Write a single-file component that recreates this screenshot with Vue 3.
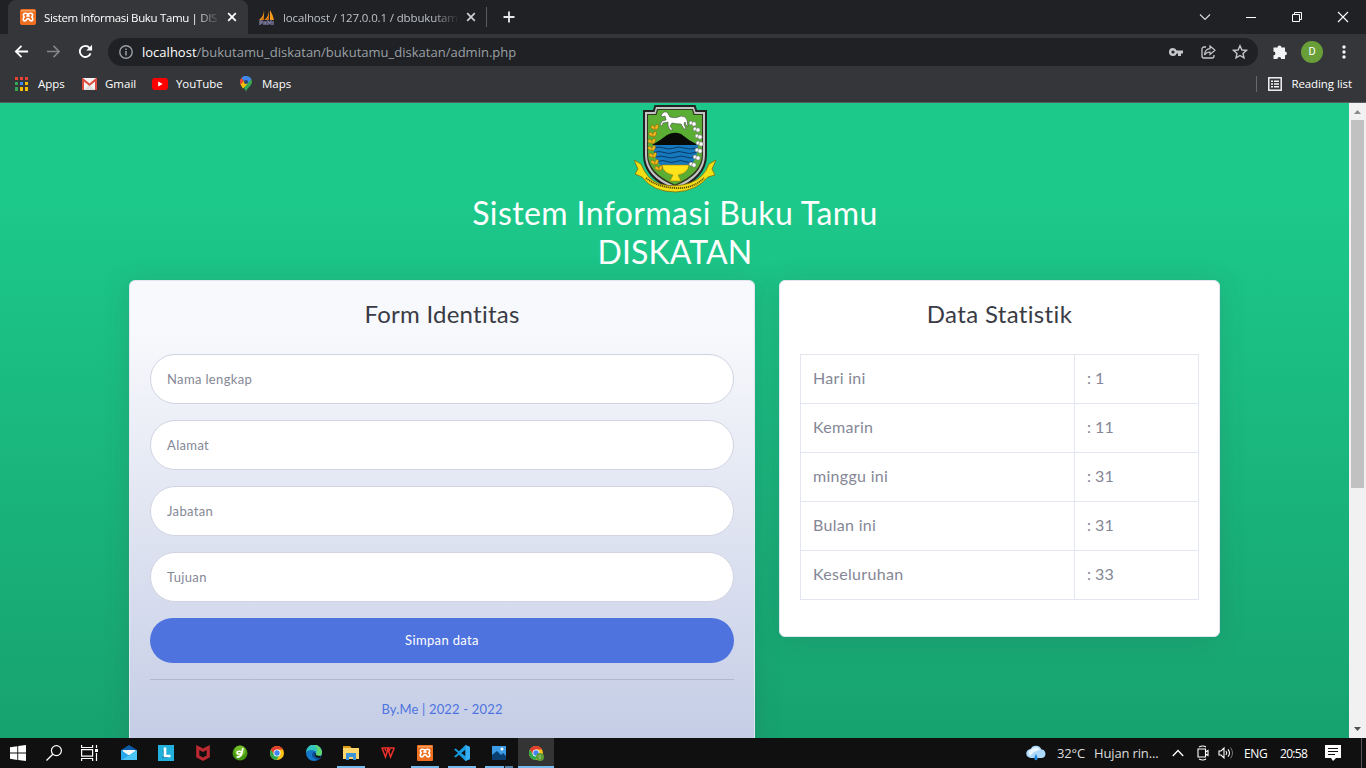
<script setup>
const fields = ['Nama lengkap', 'Alamat', 'Jabatan', 'Tujuan']
const stats = [
  ['Hari ini', ': 1'],
  ['Kemarin', ': 11'],
  ['minggu ini', ': 31'],
  ['Bulan ini', ': 31'],
  ['Keseluruhan', ': 33'],
]
const leftLeaves = [[20, 24], [18, 31], [17, 38], [17, 45], [18, 52], [20, 59], [24, 65]]
const rightBuds = [[59, 19], [63, 25], [65, 32], [66, 39], [65, 46], [63, 53], [59, 60]]
</script>

<template>
  <div class="screen">
    <header class="browser">
      <div class="tabs">
        <div class="tab active">
          <svg class="fav" viewBox="0 0 16 16"><rect width="16" height="16" rx="2" fill="#ee6f20"/><rect x="1" y="1" width="14" height="1.500" fill="#f59a5c"/><path d="M8 5.800Q7.400 4.200 5.400 4.200 3.400 4.200 3.400 6 3.400 7.300 4.300 8 3.200 8.700 3.200 10 3.200 11.900 5 11.900 6.400 11.900 6.700 10.200L8 9.500 9.300 10.200Q9.600 11.900 11 11.900 12.800 11.900 12.800 10 12.800 8.700 11.700 8 12.600 7.300 12.600 6 12.600 4.200 10.600 4.200 8.600 4.200 8 5.800zM6.400 7.500L8 6.500 9.600 7.500" fill="none" stroke="#fff" stroke-width="1.600" stroke-linejoin="round"/></svg>
          <span class="tabtitle t1">Sistem Informasi Buku Tamu | DIS</span>
          <svg class="x" viewBox="0 0 10 10"><path d="M1.2 1.2l7.6 7.6M8.8 1.2L1.2 8.8" stroke="#fff" stroke-width="1.8"/></svg>
        </div>
        <div class="tab other">
          <svg class="fav" viewBox="0 0 16 16"><path d="M5 1Q5 7 0 11H5zM10 1Q10 7 5.500 11H10zM11 1Q14 6 15 11H11z" fill="#f89c1c"/><path d="M5 1v10H2Q6 7 5 1M10 1v10H7Q11 6 10 1" fill="#c96b0c"/><path d="M1 16v-4h2v2H1m4-2v4m0-2h2m0-2v4M9 16v-4l1.500 2 1.500-2v4m2-4v4" fill="none" stroke="#77779c" stroke-width="1.400"/></svg>
          <span class="tabtitle t2">localhost / 127.0.0.1 / dbbukutam</span>
          <svg class="x" viewBox="0 0 10 10"><path d="M1.2 1.2l7.6 7.6M8.8 1.2L1.2 8.8" stroke="#cfd0d2" stroke-width="1.7"/></svg>
        </div>
        <i class="tabsep"></i>
        <svg class="plus" viewBox="0 0 12 12"><path d="M6 .5v11M.5 6h11" stroke="#e8eaed" stroke-width="1.8"/></svg>
        <div class="wincontrols">
          <svg viewBox="0 0 12 12"><path d="M1 3.5l5 5 5-5" fill="none" stroke="#ddd" stroke-width="1.1"/></svg>
          <svg viewBox="0 0 12 12"><path d="M1 6.5h10" stroke="#fff"/></svg>
          <svg viewBox="0 0 12 12"><path d="M1.5 3.5h7v7h-7zM3.5 3.5v-2h7v7h-2" fill="none" stroke="#fff"/></svg>
          <svg viewBox="0 0 12 12"><path d="M1 1l10 10M11 1L1 11" stroke="#fff" stroke-width="1.1"/></svg>
        </div>
      </div>
      <div class="toolbar">
        <svg class="nav" viewBox="0 0 16 16"><path d="M15 8H2M8 2L2 8l6 6" fill="none" stroke="#fff" stroke-width="1.9"/></svg>
        <svg class="nav" viewBox="0 0 16 16"><path d="M1 8h13M8 2l6 6-6 6" fill="none" stroke="#85868a" stroke-width="1.7"/></svg>
        <svg class="nav" viewBox="0 0 16 16"><path d="M13.4 10A5.9 5.9 0 1 1 12.3 4" fill="none" stroke="#fff" stroke-width="2"/><path d="M15 .8V7H8.8z" fill="#fff"/></svg>
        <div class="omni">
          <svg class="info" viewBox="0 0 14 14"><circle cx="7" cy="7" r="6.2" fill="none" stroke="#9aa0a6" stroke-width="1.4"/><path d="M7 6v4.4M7 3.4v1.5" stroke="#9aa0a6" stroke-width="1.5"/></svg>
          <span class="url"><b>localhost</b>/bukutamu_diskatan/bukutamu_diskatan/admin.php</span>
          <svg class="oi" viewBox="0 0 16 16"><path fill-rule="evenodd" d="M5 4a4 4 0 1 0 3.7 5.4H10V12h3V9.4h2V6.6H8.7A4 4 0 0 0 5 4zm0 2.4a1.6 1.6 0 1 1 0 3.2 1.6 1.6 0 0 1 0-3.2z" fill="#c6c7c9"/></svg>
          <svg class="oi" viewBox="0 0 16 16"><path d="M6 3H4a2 2 0 0 0-2 2v7a2 2 0 0 0 2 2h8a2 2 0 0 0 2-2v-1" fill="none" stroke="#c6c7c9" stroke-width="1.3"/><path d="M10 2l5 4.3-5 4.2V8Q6.5 8 4.5 11 5 5 10 4.7z" fill="none" stroke="#c6c7c9" stroke-width="1.2"/></svg>
          <svg class="oi" viewBox="0 0 16 16"><path d="M8 1.8l1.9 4.2 4.5.4L11 9.4l1 4.5-4-2.4-4 2.4 1-4.5-3.4-3 4.5-.4z" fill="none" stroke="#c6c7c9" stroke-width="1.4"/></svg>
        </div>
        <svg class="puzzle" viewBox="0 0 16 16"><path d="M1.5 3.500h4a2 2 0 1 1 4 0H13v4a1.9 1.9 0 1 1 0 3.8V15H9.2a1.9 1.9 0 0 0-3.8 0H1.5v-3.700a1.9 1.9 0 0 0 0-3.8z" fill="#f1f3f4"/></svg>
        <span class="avatar">D</span>
        <svg class="dots" viewBox="0 0 4 16"><g fill="#f1f3f4"><circle cx="2" cy="3" r="1.7"/><circle cx="2" cy="8" r="1.7"/><circle cx="2" cy="13" r="1.7"/></g></svg>
      </div>
      <div class="bookmarks">
        <svg class="apps" viewBox="0 0 13 14"><path d="M0 0h3v3H0zM5 0h3v3H5zM10 0h3v3h-3z" fill="#ea4335"/><path d="M0 5h3v3H0zM0 10h3v4H0z" fill="#34a853"/><path d="M5 5h3v3H5z" fill="#4285f4"/><path d="M10 5h3v3h-3zM5 10h3v4H5zM10 10h3v4h-3z" fill="#fbbc04"/></svg>
        <span class="b1">Apps</span>
        <svg class="gmail" viewBox="0 0 15 12"><rect width="15" height="12" rx="1" fill="#f3f3f3"/><path d="M2 12l5.5-5 5.5 5" fill="#ddd"/><path d="M1 12V1.4l6.5 5.4L14 1.4V12" fill="none" stroke="#dd4b3e" stroke-width="2"/></svg>
        <span class="b2">Gmail</span>
        <svg class="yt" viewBox="0 0 16 12"><rect width="16" height="12" rx="3" fill="#f00"/><path d="M6.2 3.4v5.2L10.7 6z" fill="#fff"/></svg>
        <span class="b3">YouTube</span>
        <svg class="map" viewBox="0 0 12 16"><path d="M6 0a6 6 0 0 0-6 6c0 4 5 5 6 10 1-5 6-6 6-10a6 6 0 0 0-6-6z" fill="#34a853"/><path d="M1.4 2A6 6 0 0 1 8 .4L4 5z" fill="#4285f4"/><path d="M1.4 2L4 5 .7 9A6 6 0 0 1 1.4 2z" fill="#ea4335"/><path d="M.6 8.5L4 5l3.8 2.5-5 5z" fill="#fbbc04"/><path d="M8 .4A6 6 0 0 1 11.3 3L8 7 4 5z" fill="#4285f4"/><circle cx="6" cy="6" r="2.1" fill="#28457c"/></svg>
        <span class="b4">Maps</span>
        <i class="bsep"></i>
        <svg class="read" viewBox="0 0 14 14"><rect x=".8" y=".8" width="12.4" height="12.4" fill="none" stroke="#f1f3f4" stroke-width="1.5"/><path d="M3 4.2h2M3 7h2M3 9.8h2M6 4.2h5M6 7h5M6 9.8h5" stroke="#f1f3f4" stroke-width="1.5"/></svg>
        <span class="b5">Reading list</span>
      </div>
    </header>

    <div class="view">
      <main class="page">
        <svg class="crest" viewBox="0 0 82 90">
          <path d="M20.500 1H61.500L63 6H73V51Q73 75 41 87Q9 75 9 51V6H19z" fill="#222"/>
          <path d="M22 3H60L61.500 8H71V51Q71 73 41 84.500Q11 73 11 51V8H20.500z" fill="#c4c4c4"/>
          <path d="M23 5H59L60.500 10H69V51Q69 71 41 82Q13 71 13 51V10H21.500z" fill="#303820"/>
          <path d="M24 6H58L59.500 11H68V50Q68 69 41 80.500Q14 69 14 50V11H22.500z" fill="#5aae34"/>
          <path d="M30 8L33 8 36 13Q42 15 47 12Q52 12 53 16L54 23 52 21 51 18 50 20 52 25H50L47 20Q42 20 38 19L36 22 39 26H36L34 22 34 18 29 19 28 22 26 21 28 17 32 16 31 12 28 13 27 11z" fill="#fff" stroke="#555f50" stroke-width=".7"/>
          <path d="M18 41Q27 36 33 31Q40 27 47 30Q54 36 64 41z" fill="#090b08"/>
          <path d="M19 41H64Q64 53 57 61H26Q19 53 19 41z" fill="#1678bd"/>
          <path d="M20 44q5-2 10 0t10 0 10 0 13 0M20 48.500q5-2 10 0t10 0 10 0 12 0M22 53q5-2 10 0t10 0 10 0 8 0M24 57.500q5-2 9 0t9 0 9 0 7 0" fill="none" stroke="#073c69" stroke-width="1"/>
          <path d="M28 61H55Q54 69 44 71L47 77H36L39 71Q29 69 28 61z" fill="#ffe21a" stroke="#a67c08" stroke-width=".6"/>
          <g fill="#f0b819" stroke="#875d0c" stroke-width=".5"><g v-for="p in leftLeaves" :key="p[1]"><ellipse :cx="p[0] - 1" :cy="p[1]" rx="2.700" ry="1.600" :transform="`rotate(35 ${p[0]} ${p[1]})`"/><ellipse :cx="p[0] + 2" :cy="p[1] - 2" rx="1.600" ry="2.700" :transform="`rotate(25 ${p[0]} ${p[1]})`"/></g></g>
          <g fill="#fff" stroke="#686868" stroke-width=".6"><g v-for="p in rightBuds" :key="p[1]"><circle :cx="p[0] - 2" :cy="p[1]" r="2"/><circle :cx="p[0] + 1" :cy="p[1] + 1" r="2.200"/></g></g>
          <path d="M0 56L7 60Q13 76 26 80Q41 84 56 79Q70 74 75 60L82 56 78 65 81 71 74 73Q62 87 42 88Q19 88 8 73L1 70 4 65z" fill="#f2df14" stroke="#816b0c" stroke-width=".8"/>
          <path d="M12 74Q23 83 41 84T70 74" fill="none" stroke="#5d4a12" stroke-width="1.800" stroke-dasharray="1.200 .8"/>
        </svg>
        <h1><span class="h1a">Sistem Informasi Buku Tamu</span><span class="h1b">DISKATAN</span></h1>
        <div class="cards">
          <section class="card form">
            <h2 class="hf">Form Identitas</h2>
            <input v-for="f in fields" :key="f" type="text" :placeholder="f">
            <button type="button">Simpan data</button>
            <hr>
            <a class="credit">By.Me | 2022 - 2022</a>
          </section>
          <section class="card stat">
            <h2 class="hs">Data Statistik</h2>
            <table>
              <tbody>
                <tr v-for="s in stats" :key="s[0]"><td class="k">{{ s[0] }}</td><td>{{ s[1] }}</td></tr>
              </tbody>
            </table>
          </section>
        </div>
      </main>
      <div class="scroll">
        <svg viewBox="0 0 17 17"><path d="M5 11l3.500-4 3.500 4z" fill="#8a8a8a"/></svg>
        <i></i>
        <svg viewBox="0 0 17 17"><path d="M5 6l3.500 4L12 6z" fill="#505050"/></svg>
      </div>
    </div>

    <footer class="taskbar">
      <span class="sys start"><svg viewBox="0 0 16 16"><path d="M0 2.300L7.300 1.200V7.600H0zM8.200 1.100L16 0V7.600H8.200zM0 8.500H7.300V14.900L0 13.800zM8.200 8.500H16V16L8.200 15z" fill="#fff"/></svg></span>
      <span class="sys find"><svg viewBox="0 0 16 16"><circle cx="10.400" cy="5.600" r="5" fill="none" stroke="#fff" stroke-width="1.200"/><path d="M6.800 9.200L.5 15.500" stroke="#fff" stroke-width="1.300"/></svg></span>
      <span class="sys view3"><svg viewBox="0 0 17 16"><path d="M.6 0v2.500h11V0M.6 16v-2.500h11V16M.6 4.700h11v6.500H.6zM15.500 0v3M15.500 8v8" fill="none" stroke="#fff" stroke-width="1.200"/><path d="M14 4h3v3h-3z" fill="#fff"/></svg></span>
      <span class="app"><svg viewBox="0 0 16 16"><path d="M0 5l8-5 8 5v3H0z" fill="#0d5aa7"/><path d="M1.500 5h13v5h-13z" fill="#f1f8fc"/><path d="M0 5l8 5.500L16 5v10H0z" fill="#28a8ea"/><path d="M16 5v10H1z" fill="#4cc4f5"/></svg></span>
      <span class="app"><svg viewBox="0 0 16 16"><path d="M0 0h16v16H0z" fill="#22b0dc"/><path d="M4 4l2 6-2 3h6" fill="#087199"/><path d="M7 2.500v8.500h5.500" fill="none" stroke="#fff" stroke-width="2.600"/></svg></span>
      <span class="app"><svg viewBox="0 0 16 16"><path d="M1.200 0L8 3.500 14.800 0v12.300L8 16l-6.800-3.700zM4.300 5v5.500L8 12.600l3.700-2.100V5L8 7z" fill-rule="evenodd" fill="#bd2931"/></svg></span>
      <span class="app"><svg viewBox="0 0 16 16"><circle cx="8" cy="8" r="7.500" fill="#459610"/><circle cx="8" cy="6" r="5.500" fill="#71bd2a"/><path d="M11 3L9.500 9Q8.500 12.500 4.500 12" fill="none" stroke="#fff" stroke-width="1.700"/><ellipse cx="7.300" cy="7.800" rx="2.300" ry="1.500" fill="none" stroke="#fff" stroke-width="1.500"/></svg></span>
      <span class="app"><svg viewBox="0 0 16 16"><circle cx="8" cy="8" r="7" fill="#fbc116"/><path d="M1.940 4.500A7 7 0 0 0 7.500 15L11 9.500H5z" fill="#2da94f"/><path d="M1.940 4.500A7 7 0 0 1 14.060 4.500H8L5 9.500z" fill="#e33b2e"/><circle cx="8" cy="8" r="3.500" fill="#fff"/><circle cx="8" cy="8" r="2.700" fill="#4285f4"/></svg></span>
      <span class="app"><svg viewBox="0 0 16 16"><circle cx="8" cy="8" r="8" fill="#1477c9"/><path d="M0 7A8 8 0 0 1 16 8Q15 12 10 11 8.500 10 10 8 9 4.500 5 5 2 5 0 7z" fill="#34c4be"/><path d="M8 0a8 8 0 0 1 8 8q-1 4-6 3 1-1 .5-3Q13 4 8 0z" fill="#62d56b"/><path d="M10 6Q6 7 6 10t6 5.100Q15 13.500 15.500 12 8 14 8.500 8z" fill="#0b4c99"/><path d="M9.700 8Q8.500 11 15 11L14 13Q8 13 8.500 8z" fill="#111"/></svg></span>
      <span class="app open"><svg viewBox="0 0 16 16"><path d="M0 1h7l1.500 2H0z" fill="#dc9b12"/><path d="M0 3h16v11H0z" fill="#ffd669"/><path d="M3 8h10v7h-3v-3H6v3H3z" fill="#3c94d8"/></svg></span>
      <span class="app"><svg viewBox="0 0 16 16"><path d="M1.500 3H14.500M2 3l3.500 9L8 4l2.500 8L14.300 3M5 4l1 2m4-2L9 6" fill="none" stroke="#f0302a" stroke-width="1.500"/></svg></span>
      <span class="app open"><svg viewBox="0 0 16 16"><rect width="16" height="16" rx="1" fill="#ee6f20"/><rect x="1" y="1" width="14" height="1.500" fill="#f59a5c"/><path d="M8 5.800Q7.400 4.200 5.400 4.200 3.400 4.200 3.400 6 3.400 7.300 4.300 8 3.200 8.700 3.200 10 3.200 11.900 5 11.900 6.400 11.900 6.700 10.200L8 9.500 9.300 10.200Q9.600 11.900 11 11.900 12.800 11.900 12.800 10 12.800 8.700 11.700 8 12.600 7.300 12.600 6 12.600 4.200 10.600 4.200 8.600 4.200 8 5.800zM6.400 7.500L8 6.500 9.600 7.500" fill="none" stroke="#fff" stroke-width="1.600" stroke-linejoin="round"/></svg></span>
      <span class="app open"><svg viewBox="0 0 16 16"><path d="M11.500 0L16 2v12l-4.500 2L5 9.700l-3.300 2.700L0 11.500 4 8 0 4.500l1.700-.9L5 6.300zM11.500 4.700L7.300 8l4.200 3.300z" fill-rule="evenodd" fill="#169be0"/><path d="M11.500 0L16 2v12l-4.500 2z" fill="#35abf0"/></svg></span>
      <span class="app open double"><svg viewBox="0 0 16 16"><path d="M1 1h14v14H1z" fill="#3b9be6"/><path d="M1 10l5-4 4 4 2-2 3 3v4H1z" fill="#0b3f72"/><circle cx="11" cy="4" r="1.500" fill="#fff"/></svg></span>
      <span class="app open current"><svg viewBox="0 0 16 16"><circle cx="8" cy="8" r="7" fill="#fbc116"/><path d="M1.940 4.500A7 7 0 0 0 7.500 15L11 9.500H5z" fill="#2da94f"/><path d="M1.940 4.500A7 7 0 0 1 14.060 4.500H8L5 9.500z" fill="#e33b2e"/><circle cx="8" cy="8" r="3.500" fill="#fff"/><circle cx="8" cy="8" r="2.700" fill="#4285f4"/><circle cx="12" cy="12" r="4" fill="#5e9c36"/><path d="M11 10.500v3h1.500v-3z" fill="none" stroke="#a8c98e" stroke-width=".6"/></svg></span>
      <div class="tray">
        <svg class="cloud" viewBox="0 0 20 16"><path d="M5 13a4.500 4.500 0 0 1-.5-9A6 6 0 0 1 15.500 4.500 4.300 4.300 0 0 1 16 13z" fill="#acd9fa"/><path d="M4 11a4 4 0 0 1 2-7A5 5 0 0 1 14 4.500L8 7z" fill="#e9f6ff"/><path d="M10 9q-2.500 4-1.500 5.500t3 0Q12 13 10 9z" fill="#2185d8"/></svg>
        <span class="temp">32°C</span>
        <span class="wx">Hujan rin...</span>
        <svg class="chev" viewBox="0 0 12 8"><path d="M.8 7L6 1.500 11.200 7" fill="none" stroke="#fff" stroke-width="1.300"/></svg>
        <svg class="cam" viewBox="0 0 12 16"><path d="M1 4h7.500v8H1zM8.500 7L11 5.500v5L8.500 9M2 2q4-2 7 0M2 14q4 2 7 0" fill="none" stroke="#fff" stroke-width="1.100"/></svg>
        <svg class="vol" viewBox="0 0 16 14"><path d="M1 5h2l3-3v10L3 9H1zM8 5q1.500 2 0 4M10 3.300q3 3.700 0 7.400" fill="none" stroke="#fff" stroke-width="1.100"/><path d="M12.500 1.500q4 5.500 0 11" fill="none" stroke="#777"/></svg>
        <span class="eng">ENG</span>
        <span class="time">20:58</span>
        <svg class="note" viewBox="0 0 16 16"><path d="M0 0h16v13h-5l-3 3-2-3H0z" fill="#fff"/><path d="M3 3.500h10M3 6.500h10M3 9.500h7" stroke="#111"/></svg>
        <i class="peek"></i>
      </div>
    </footer>
  </div>
</template>

<style>
body { margin: 0; background: #111; overflow: hidden; }
</style>
<style scoped>
* { box-sizing: border-box; }
svg { display: block; flex: none; }
.screen { width: 1366px; height: 768px; display: flex; flex-direction: column; overflow: hidden; font-family: "Open Sans", "Noto Sans", sans-serif; font-size: 12px; color: #fff; font-variant-ligatures: none; }
.browser { height: 103px; background: #35363a; border-bottom: 1px solid #5b5c60; flex: none; }
span { white-space: nowrap; }
.tabs { height: 34px; background: #202124; display: flex; align-items: center; padding-left: 8px; }
.tab { height: 34px; display: flex; align-items: center; padding-left: 12px; width: 240px; }
.tab.active { background: #35363a; border-radius: 8px 8px 0 0; }
.tab.other { width: 238px; padding-left: 11px; color: #bdc1c6; }
.fav { width: 16px; height: 16px; margin-right: 8px; }
.tabtitle { width: 175px; font-size: 11.5px; -webkit-mask-image: linear-gradient(90deg, #000 150px, transparent 176px); mask-image: linear-gradient(90deg, #000 150px, transparent 176px); }
.t1 { letter-spacing: -.35px; }
.t2 { letter-spacing: -.14px; }
.x { width: 10px; height: 10px; margin-left: 8px; }
.tabsep { width: 1px; height: 20px; background: #5a5b5e; }
.plus { width: 12px; height: 12px; margin-left: 16px; }
.wincontrols { display: flex; margin-left: auto; gap: 34px; padding-right: 17px; height: 28px; align-items: center; }
.wincontrols svg { width: 12px; height: 12px; }
.toolbar { height: 35px; display: flex; align-items: center; padding: 0 20px 0 14px; }
.nav { width: 15px; height: 15px; margin-right: 17px; }
.toolbar .nav:nth-child(3) { margin-right: 15px; }
.omni { width: 1150px; height: 28px; border-radius: 14px; background: #202124; display: flex; align-items: center; padding: 0 10px 0 11px; gap: 16px; }
.info { width: 14px; height: 14px; }
.url { flex: 1; margin-left: -7px; font-size: 13px; color: #9aa0a6; letter-spacing: .01px; }
.url b { font-weight: 400; color: #fff; }
.oi { width: 16px; height: 16px; }
.puzzle { width: 16px; height: 16px; margin-left: 14px; }
.avatar { width: 22px; height: 22px; border-radius: 50%; background: #689f38; margin-left: 13px; font: 11px/22px Roboto, sans-serif; text-align: center; }
.dots { width: 4px; height: 16px; margin-left: auto; }
.bookmarks { height: 31px; display: flex; align-items: center; padding: 0 14px 2px 15px; }
.apps { width: 13px; height: 14px; margin-right: 10px; }
.b1 { width: 44px; }
.gmail { width: 15px; height: 12px; margin-right: 8px; }
.b2 { width: 47px; }
.yt { width: 16px; height: 12px; margin-right: 8px; }
.b3 { width: 64px; letter-spacing: -.1px; }
.map { width: 12px; height: 16px; margin-right: 10px; }
.bsep { width: 1px; height: 16px; background: #68696c; margin-left: auto; margin-right: 11px; }
.read { width: 14px; height: 14px; margin-right: 9px; }
.bookmarks span { font-size: 11.500px; }
.b5 { letter-spacing: -.08px; }

.view { height: 635px; display: flex; overflow: hidden; flex: none; }
.page { width: 1349px; height: 1037px; background: linear-gradient(180deg, #1cc88a 10%, #13855c 100%); display: flex; flex-direction: column; align-items: center; font-family: Lato, sans-serif; }
.crest { width: 82px; height: 90px; margin: 1px 0 0 1px; }
h1 { margin: 0 0 9px 1px; font-size: 32px; line-height: 38.500px; font-weight: 400; display: flex; flex-direction: column; align-items: center; height: 77px; }
.h1a { letter-spacing: .4px; }
.h1b { letter-spacing: .1px; }
.cards { display: grid; grid-template-columns: 626px 441px; gap: 24px; align-items: start; }
.card { border: 1px solid #e3e6f0; border-radius: 6px; box-shadow: 0 2.400px 28px rgba(58,59,69,.15); padding: 18px 20px 20px; background: #fff; display: flex; flex-direction: column; }
.form { height: 480px; background: linear-gradient(180deg, #f8f9fc 10%, #c2cbe5 100%); }
.stat { height: 357px; }
h2 { margin: 0 0 26px; height: 29px; line-height: 29px; font-size: 24px; font-weight: 400; color: #3a3b45; text-align: center; letter-spacing: .25px; }
.hs { letter-spacing: .35px; }
input { width: 584px; height: 50px; border: 1px solid #d1d3e2; border-radius: 25px; padding: 0 16px; margin: 0 0 16px; background: #fff; font: 13px Lato, sans-serif; letter-spacing: .35px; }
input::placeholder { color: #858796; opacity: 1; }
button { width: 584px; height: 45px; border: 0; border-radius: 23px; background: #4e73df; color: #fff; font: 13px Lato, sans-serif; letter-spacing: .35px; padding: 0 0 2px; }
hr { width: 584px; height: 1px; border: 0; background: #b0b7ce; margin: 16px 0 20px; }
.credit { color: #4e73df; font-size: 13px; line-height: 18px; text-align: center; letter-spacing: .17px; }
table { width: 399px; border-collapse: collapse; color: #858796; font-size: 16px; line-height: 24px; }
td { border: 1px solid #e3e6f0; padding: 11px 12px 13px; height: 49px; }
.k { width: 274px; letter-spacing: .3px; }
.scroll { width: 17px; background: #f1f1f1; display: flex; flex-direction: column; }
.scroll svg { width: 17px; height: 17px; }
.scroll i { width: 13px; height: 368px; background: #c1c1c1; margin: 0 2px auto; }

.taskbar { height: 30px; background: #101010; display: flex; align-items: center; flex: none; }
.sys svg { width: 16px; height: 16px; }
.start { margin-left: 10px; }
.find { margin-left: 20px; }
.view3 { margin-left: 19px; margin-right: 12px; }
.view3 svg { width: 17px; }
.app { width: 37px; height: 30px; display: flex; align-items: center; justify-content: center; }
.app svg { width: 16px; height: 16px; }
.open { background: linear-gradient(#76b9ed, #76b9ed) center bottom / 28px 2px no-repeat; }
.double { background: linear-gradient(90deg, #76b9ed 19px, #111 19px, #111 20px, #5484a9 20px) center bottom / 28px 2px no-repeat; }
.current { background: linear-gradient(#76b9ed, #76b9ed) center bottom / 100% 2px no-repeat #343434; margin-left: 1px; width: 36px; }
.tray { margin-left: auto; display: flex; align-items: center; height: 30px; }
.cloud { width: 20px; height: 16px; margin-right: 11px; }
.temp { width: 37px; font-size: 13px; color: #ddd; letter-spacing: -.15px; }
.wx { width: 78px; font-size: 13px; color: #ddd; letter-spacing: -.15px; }
.chev { width: 12px; height: 8px; margin-right: 13px; }
.cam { width: 12px; height: 16px; margin-right: 9px; }
.vol { width: 16px; height: 14px; margin-right: 10px; }
.eng { width: 36px; letter-spacing: -.4px; }
.time { width: 45px; letter-spacing: -.7px; }
.note { width: 16px; height: 16px; margin-right: 20px; }
.peek { width: 1px; height: 30px; background: #555; margin-right: 4px; }
</style>
